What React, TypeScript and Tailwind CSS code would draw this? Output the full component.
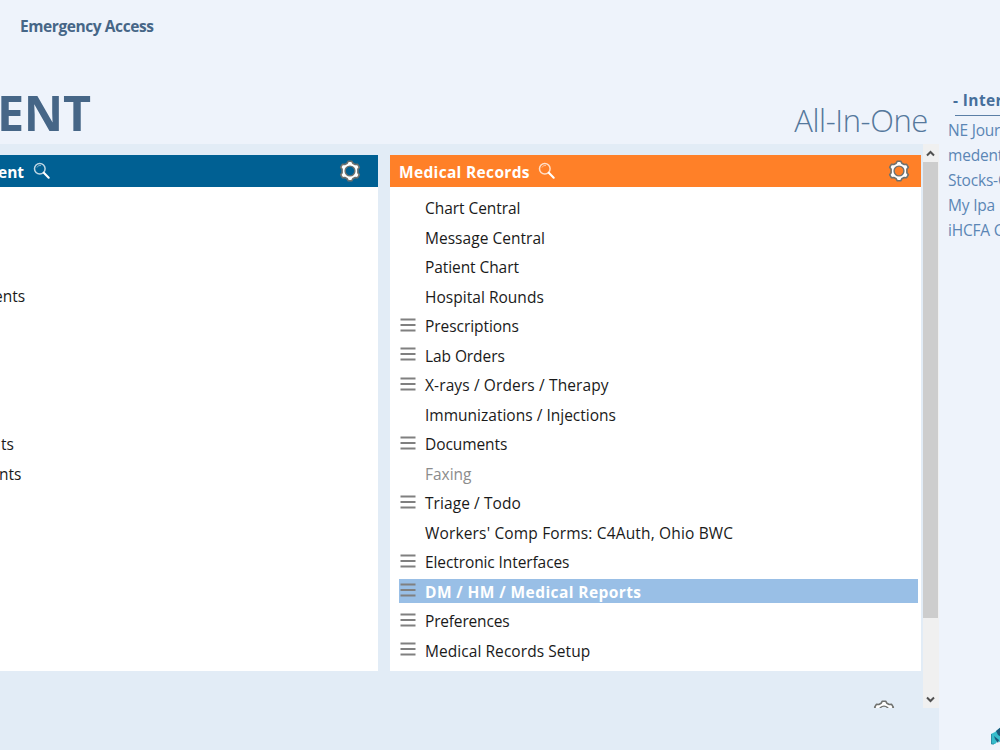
import React from 'react';
import { clsx } from 'clsx';

interface MenuItem {
  label: string;
  tracking: string;
  submenu?: boolean;
  disabled?: boolean;
  selected?: boolean;
}

const RECORD_ITEMS: MenuItem[] = [
  { label: 'Chart Central', tracking: 'tracking-[-0.05px]' },
  { label: 'Message Central', tracking: 'tracking-[0.03px]' },
  { label: 'Patient Chart', tracking: 'tracking-[-0.08px]' },
  { label: 'Hospital Rounds', tracking: 'tracking-[0.03px]' },
  { label: 'Prescriptions', tracking: 'tracking-[-0.05px]', submenu: true },
  { label: 'Lab Orders', tracking: 'tracking-[-0.08px]', submenu: true },
  { label: 'X-rays / Orders / Therapy', tracking: 'tracking-[0.12px]', submenu: true },
  { label: 'Immunizations / Injections', tracking: 'tracking-[0.01px]' },
  { label: 'Documents', tracking: 'tracking-[-0.08px]', submenu: true },
  { label: 'Faxing', tracking: 'tracking-[-0.03px]', disabled: true },
  { label: 'Triage / Todo', tracking: 'tracking-[0.07px]', submenu: true },
  { label: "Workers' Comp Forms: C4Auth, Ohio BWC", tracking: 'tracking-[0.16px]' },
  { label: 'Electronic Interfaces', tracking: 'tracking-[-0.1px]', submenu: true },
  { label: 'DM / HM / Medical Reports', tracking: 'tracking-[0.41px]', submenu: true, selected: true },
  { label: 'Preferences', tracking: 'tracking-[-0.18px]', submenu: true },
  { label: 'Medical Records Setup', tracking: 'tracking-[0.06px]', submenu: true },
];

// The left panel scrolls out of view, only the line endings stay visible
const LEFT_ROWS = [
  { text: '', offset: '' },
  { text: '', offset: '' },
  { text: '', offset: '' },
  { text: 'ents', offset: '-ml-1.5' },
  { text: '', offset: '' },
  { text: '', offset: '' },
  { text: '', offset: '' },
  { text: '', offset: '' },
  { text: 'ts', offset: 'ml-px' },
  { text: 'nts', offset: '-ml-px' },
];

const LINKS = ['NE Journal', 'medent', 'Stocks-Online', 'My Ipa', 'iHCFA Center'];

const SearchIcon = () => (
  <svg width="18" height="18" viewBox="0 0 18 18" fill="none" className="shrink-0">
    <circle cx="6.8" cy="6.8" r="5.3" stroke="white" strokeOpacity="0.75" strokeWidth="1.5" />
    <path d="M4 5.5a3.4 3.4 0 0 1 4-2" stroke="white" strokeOpacity="0.5" />
    <path d="M10.8 10.8L15.7 15.7" stroke="white" strokeWidth="2.1" strokeLinecap="round" />
  </svg>
);

const GearIcon = ({ hole }: { hole: string }) => (
  <svg width="22" height="22" viewBox="0 0 22 22" className="shrink-0">
    <path
      d="M8.2 3.2L9.3 1.2H12.7L13.8 3.2L16.2 4.5L18.6 4.3L20.3 7.2L18.9 9.3V12.7L20.3 14.8L18.6 17.7L16.2 17.5L13.8 18.8L12.7 20.8H9.3L8.2 18.8L5.8 17.5L3.4 17.7L1.7 14.8L3.1 12.7V9.3L1.7 7.2L3.4 4.3L5.8 4.5Z"
      fill="white"
      stroke="#6f716e"
      strokeWidth="1.6"
      strokeLinejoin="round"
    />
    <circle cx="11" cy="11" r="4.9" fill={hole} stroke="#6f716e" strokeWidth="1.4" />
  </svg>
);

const MenuLines = () => (
  <svg width="16" height="14" viewBox="0 0 16 14" className="shrink-0">
    <path d="M0.5 1.5h15M0.5 7h15M0.5 12.5h15" stroke="#808080" strokeWidth="1.9" />
  </svg>
);

const MenuRow = ({ item }: { item: MenuItem }) => (
  <li className="flex h-[29.53px] items-center">
    <div
      className={clsx(
        'flex h-6 w-[519px] items-center text-[15.5px] leading-6',
        item.selected && 'bg-[#99bfe6] font-bold text-white',
        item.disabled && 'text-[#8c8c8c]',
        !item.selected && !item.disabled && 'text-[#1a1a1a]',
      )}
    >
      <span className="flex w-[26px] items-center pb-0.5 pl-px">{item.submenu && <MenuLines />}</span>
      <span className={clsx('pt-px whitespace-nowrap', item.tracking)}>{item.label}</span>
    </div>
  </li>
);

const ScrollBar = () => (
  <div className="flex h-[564px] w-4 shrink-0 flex-col bg-[#f0f0f0]">
    <div className="flex h-[18px] items-center justify-center pt-px pr-0.5">
      <svg width="9" height="7" viewBox="0 0 9 7" fill="none">
        <path d="M1 5.5L4.5 2L8 5.5" stroke="#505050" strokeWidth="2" />
      </svg>
    </div>
    <div className="h-[456px] w-[15px] bg-[#cdcdcd]" />
    <div className="flex-1" />
    <div className="flex h-[17px] items-center justify-center pr-0.5">
      <svg width="9" height="7" viewBox="0 0 9 7" fill="none">
        <path d="M1 1.5L4.5 5L8 1.5" stroke="#505050" strokeWidth="2" />
      </svg>
    </div>
  </div>
);

export default function App() {
  return (
    <div className="flex h-[750px] w-[1000px] overflow-hidden bg-[#eef3fb] font-['Open_Sans',sans-serif]">
      <main className="flex w-[939px] shrink-0 flex-col">
        <header className="flex h-36 flex-col">
          <div className="pt-3.5 pl-5 text-[15.5px] leading-6 font-bold tracking-[-0.42px] text-[#466687]">
            Emergency Access
          </div>
          <div className="flex flex-1 items-end justify-between pr-[11px]">
            <h1 className="-ml-[3px] pb-px text-[48.5px] leading-[62px] font-bold tracking-[-0.3px] text-[#466687]">
              ENT
            </h1>
            <span className="pb-1 text-[31px] leading-10 font-light tracking-[-0.4px] text-[#55789c]">
              All-In-One
            </span>
          </div>
        </header>

        <div className="flex flex-1 bg-[#e2ecf6]">
          <div className="flex h-[564px] w-[923px] flex-col overflow-hidden">
            <div className="flex gap-3 pt-[11px]">
              <section className="h-[516px] w-[378px] bg-white">
                <div className="flex h-8 items-center bg-[#006093] pr-[17px] text-white">
                  <span className="-ml-0.5 w-[35px] pt-[3px] text-[15.5px] font-bold">ent</span>
                  <SearchIcon />
                  <span className="ml-auto">
                    <GearIcon hole="#006093" />
                  </span>
                </div>
                <ul className="pt-[6px]">
                  {LEFT_ROWS.map((row, i) => (
                    <li key={i} className="flex h-[29.53px] items-center pt-[1.5px] text-[15.5px] text-[#1a1a1a]">
                      <span className={row.offset}>{row.text}</span>
                    </li>
                  ))}
                </ul>
              </section>

              <section className="h-[516px] w-[531px] bg-white">
                <div className="flex h-8 items-center bg-[#ff8028] pr-[11px] pl-[9px] text-white">
                  <span className="w-[139px] pt-[3px] text-[15.5px] font-bold tracking-[0.33px] whitespace-nowrap">
                    Medical Records
                  </span>
                  <SearchIcon />
                  <span className="ml-auto">
                    <GearIcon hole="#ff8028" />
                  </span>
                </div>
                <ul className="pt-[5.8px] pl-[9px]">
                  {RECORD_ITEMS.map((item) => (
                    <MenuRow key={item.label} item={item} />
                  ))}
                </ul>
              </section>
            </div>
            <div className="mt-[29px] flex justify-end pr-7">
              <GearIcon hole="#e2ecf6" />
            </div>
          </div>
          <ScrollBar />
        </div>
      </main>

      <aside className="flex flex-1 flex-col overflow-hidden text-[15.5px] whitespace-nowrap text-[#5b86b5]">
        <div className="mt-[88px] ml-4 h-7 w-40 border-b border-[#5b7fa6] leading-6 font-bold tracking-[0.4px] text-[#466f9b]">
          <span className="-ml-0.5">- Internet</span>
        </div>
        <ul className="mt-0.5 pl-[9px]">
          {LINKS.map((link) => (
            <li key={link} className="h-[25px] leading-[25px] tracking-[-0.2px]">
              {link}
            </li>
          ))}
        </ul>
        <div className="mt-auto ml-[52px] h-[23px]">
          <svg width="24" height="20" viewBox="0 0 24 20">
            <path d="M0 7L4 5L10 0V16L7 14L4 17L0 17Z" fill="#36bccb" />
            <path d="M5 4L10 0V10L7 8ZM3 9L8 13L7 16L4 12Z" fill="#1b5a7c" />
            <path d="M0.5 7V17H3" fill="none" stroke="#2b8fa6" />
          </svg>
        </div>
      </aside>
    </div>
  );
}
